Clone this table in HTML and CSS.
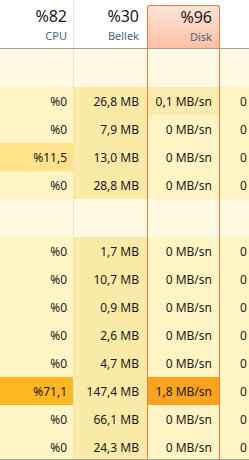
FILE: index.html
```html
<!DOCTYPE html>
<html lang="tr">
<head>
<meta charset="utf-8">
<link rel="stylesheet" href="styles.css">
</head>
<body>
<div class="view">
  <div class="head">
    <div class="hc c1"><span class="pct">%82</span><span class="lbl">CPU</span></div>
    <div class="hc c2"><span class="pct">%30</span><span class="lbl">Bellek</span></div>
    <div class="hc c3 sel"><span class="pct">%96</span><span class="lbl">Disk</span></div>
    <div class="hc c4"></div>
  </div>
  <div class="row group"><div class="c c1"></div><div class="c c2"></div><div class="c c3"></div><div class="c c4"></div></div>
  <div class="row"><div class="c c1">%0</div><div class="c c2">26,8 MB</div><div class="c c3 dlight">0,1 MB/sn</div><div class="c c4">0 Mb/sn</div></div>
  <div class="row"><div class="c c1">%0</div><div class="c c2">7,9 MB</div><div class="c c3">0 MB/sn</div><div class="c c4">0 Mb/sn</div></div>
  <div class="row"><div class="c c1 h1">%11,5</div><div class="c c2">13,0 MB</div><div class="c c3">0 MB/sn</div><div class="c c4">0 Mb/sn</div></div>
  <div class="row"><div class="c c1">%0</div><div class="c c2">28,8 MB</div><div class="c c3">0 MB/sn</div><div class="c c4">0 Mb/sn</div></div>
  <div class="row group"><div class="c c1"></div><div class="c c2"></div><div class="c c3"></div><div class="c c4"></div></div>
  <div class="row"><div class="c c1">%0</div><div class="c c2">1,7 MB</div><div class="c c3">0 MB/sn</div><div class="c c4">0 Mb/sn</div></div>
  <div class="row"><div class="c c1">%0</div><div class="c c2">10,7 MB</div><div class="c c3">0 MB/sn</div><div class="c c4">0 Mb/sn</div></div>
  <div class="row"><div class="c c1">%0</div><div class="c c2">0,9 MB</div><div class="c c3">0 MB/sn</div><div class="c c4">0 Mb/sn</div></div>
  <div class="row"><div class="c c1">%0</div><div class="c c2">2,6 MB</div><div class="c c3">0 MB/sn</div><div class="c c4">0 Mb/sn</div></div>
  <div class="row"><div class="c c1">%0</div><div class="c c2">4,7 MB</div><div class="c c3">0 MB/sn</div><div class="c c4">0 Mb/sn</div></div>
  <div class="row"><div class="c c1 h3">%71,1</div><div class="c c2">147,4 MB</div><div class="c c3 dhot">1,8 MB/sn</div><div class="c c4">0 Mb/sn</div></div>
  <div class="row"><div class="c c1">%0</div><div class="c c2">66,1 MB</div><div class="c c3">0 MB/sn</div><div class="c c4">0 Mb/sn</div></div>
  <div class="row"><div class="c c1">%0</div><div class="c c2">24,3 MB</div><div class="c c3">0 MB/sn</div><div class="c c4">0 Mb/sn</div></div>
</div>
</body>
</html>
```
FILE: styles.css
```css
html, body {
  margin: 0;
  padding: 0;
  background: #ffffff;
  overflow: hidden;
}
.view {
  width: 249px;
  height: 459px;
  overflow: hidden;
  border-bottom: 1px solid #a0a0a0;
  font-family: "Noto Sans", "Liberation Sans", sans-serif;
  color: #1a1a1a;
}
.head {
  display: flex;
  height: 49px;
  border-bottom: 1px solid #a0a0a0;
  box-sizing: border-box;
  background: #ffffff;
}
.row {
  display: flex;
  height: 28px;
  background: #fff4c4;
}
.row.group {
  height: 38px;
  background: #fff8e2;
}
.c1 { width: 74px; flex: none; box-sizing: border-box; border-right: 1px solid #f3e4ad; padding-right: 6px; }
.c2 { width: 73px; flex: none; box-sizing: border-box; padding-right: 8px; }
.c3 { width: 73px; flex: none; box-sizing: border-box; border-left: 1px solid #ec7a3c; border-right: 1px solid #ec7a3c; padding-right: 7px; }
.c4 { width: 73px; flex: none; box-sizing: border-box; padding-right: 7px; }
.c {
  display: flex;
  align-items: center;
  justify-content: flex-end;
  font-size: 12px;
  white-space: nowrap;
}
.row .c2 { background: #f9eaa8; }
.row.group .c2 { background: transparent; }
.row.group .c1 { border-right-color: #efe3bd; }
.h1 { background: #ffe28a; }
.h3 { background: #fcb823; }
.dlight { background: #f9ebae; }
.dhot { background: #fba321; }
.hc {
  display: flex;
  flex-direction: column;
  align-items: flex-end;
  justify-content: flex-start;
  padding-top: 6px;
}
.head .c1 { border-right-color: #e4e4e4; }
.head .c3 {
  margin-top: 5px;
  padding-top: 1px;
  border-top: 1px solid #ec7a3c;
  border-radius: 3px 3px 0 0;
  background: linear-gradient(#fde4d8, #fbc0a4);
}
.pct {
  font-size: 16px;
  line-height: 20px;
  color: #1a1a1a;
}
.lbl {
  font-size: 11px;
  line-height: 16px;
  margin-top: 2px;
  color: #4c5f80;
}
```
